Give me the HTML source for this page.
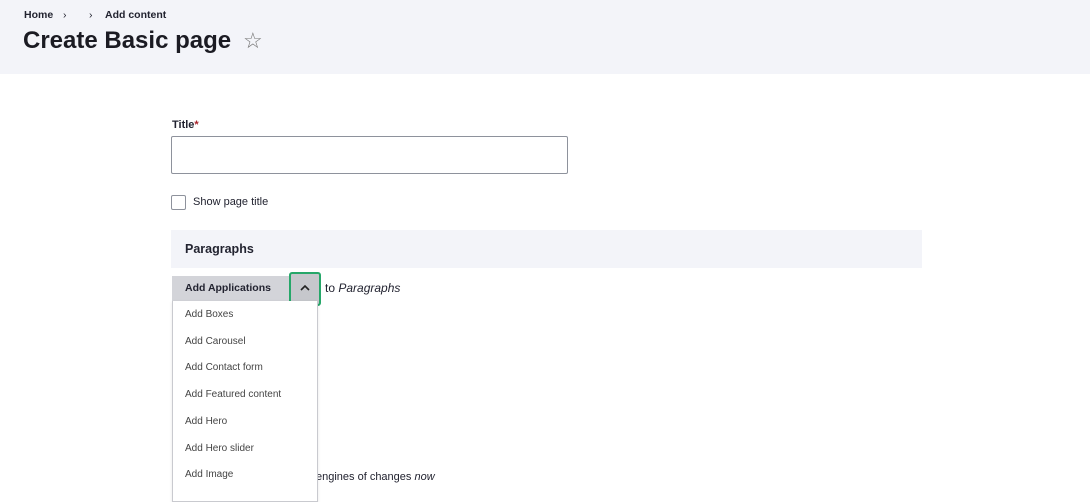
<!DOCTYPE html>
<html><head><style>
body{margin:0;width:1090px;height:491px;overflow:hidden;background:#fff;font-family:"Liberation Sans",sans-serif;color:#222330;position:relative}
.hdr{position:absolute;left:0;top:0;width:1090px;height:74px;background:#f3f4f9}
.a{position:absolute;white-space:nowrap}
</style></head><body>
<div class="hdr"></div>
<div class="a" style="left:24px;top:9px;font-size:10.5px;font-weight:bold">Home</div>
<div class="a" style="left:63px;top:9px;font-size:10.5px">›</div>
<div class="a" style="left:89px;top:9px;font-size:10.5px">›</div>
<div class="a" style="left:105px;top:9px;font-size:10.5px;font-weight:bold">Add content</div>
<div class="a" style="left:23px;top:27px;font-size:24px;font-weight:bold;color:#1b1b23">Create Basic page</div>
<div class="a" style="left:243px;top:28px;font-size:22px;color:#777">☆</div>

<div class="a" style="left:172px;top:119px;font-size:11px;font-weight:bold">Title<span style="color:#a8232b">*</span></div>
<div class="a" style="left:171px;top:136px;width:395px;height:36px;border:1px solid #8e929c;border-radius:2px"></div>
<div class="a" style="left:171px;top:195px;width:13px;height:13px;border:1px solid #8e929c;border-radius:2px"></div>
<div class="a" style="left:193px;top:196px;font-size:11px">Show page title</div>
<div class="a" style="left:171px;top:230px;width:751px;height:38px;background:#f3f4f9"></div>
<div class="a" style="left:185px;top:242px;font-size:12.5px;font-weight:bold">Paragraphs</div>

<div class="a" style="left:316px;top:471px;font-size:11px">engines of changes <i>now</i></div>
<div class="a" style="left:172px;top:276px;width:146px;height:25px;background:#d3d4d9"></div>
<div class="a" style="left:185px;top:282px;font-size:10.5px;font-weight:bold">Add Applications</div>
<div class="a" style="left:289px;top:272px;width:28px;height:30px;border:2px solid #26a769;border-radius:3px;background:#c6c7cc"></div>
<svg class="a" style="left:299px;top:283px" width="12" height="10"><path d="M2 7 L6 3 L10 7" stroke="#222" stroke-width="1.6" fill="none"/></svg>
<div class="a" style="left:325px;top:281px;font-size:12px">to <i>Paragraphs</i></div>
<div class="a" style="left:172px;top:301px;width:144px;height:200px;background:#fff;border:1px solid #c9cacf;border-top:none;box-shadow:0 1px 3px rgba(0,0,0,.1)"></div>
<div class="a" style="left:185px;top:302px;font-size:10px;color:#444;line-height:26.7px">Add Boxes<br>Add Carousel<br>Add Contact form<br>Add Featured content<br>Add Hero<br>Add Hero slider<br>Add Image</div>
</body></html>
